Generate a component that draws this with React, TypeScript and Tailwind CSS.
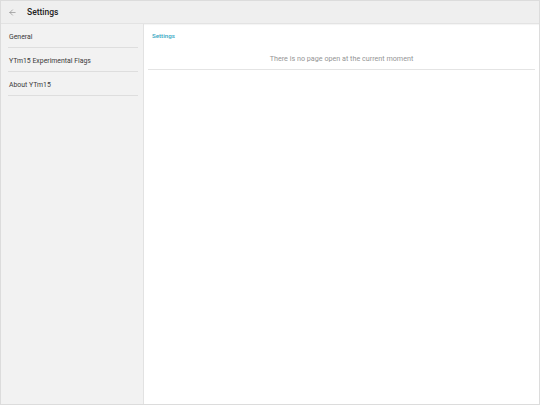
import { ArrowLeft } from 'lucide-react';

const items = ['General', 'YTm15 Experimental Flags', 'About YTm15'];

const App = () => {
  return (
    <div
      className="w-[540px] h-[405px] flex flex-col bg-white border border-[#dcdcdc] overflow-hidden"
      style={{ fontFamily: 'Roboto, "Noto Sans", sans-serif' }}
    >
      {/* Top bar */}
      <div className="h-[23px] shrink-0 flex items-center bg-[#efefef] border-b border-[#e3e3e3] shadow-[0_1px_1px_rgba(0,0,0,0.04)]">
        <ArrowLeft className="w-[9px] h-[9px] ml-[7px] text-[#888]" strokeWidth={1.75} />
        <span className="ml-[10px] text-[8.5px] font-medium text-[#222]">Settings</span>
      </div>

      <div className="flex flex-1">
        {/* Sidebar */}
        <div className="w-[143px] shrink-0 bg-[#f2f2f2] border-r border-[#e2e2e2]">
          {items.map((item) => (
            <div
              key={item}
              className="h-[24px] ml-[7px] mr-[5px] pl-[1px] pt-[3px] flex items-center border-b border-[#dedede] text-[6.9px] text-[#3a3a3a]"
            >
              {item}
            </div>
          ))}
        </div>

        {/* Content */}
        <div className="flex-1 px-[4px]">
          <div className="h-[23px] pt-[2px] flex items-center pl-[4px] text-[6.2px] font-medium text-[#35a6c2]">
            Settings
          </div>
          <div className="h-[23px] pt-[3px] flex items-center justify-center border-b border-[#e4e4e4] text-[7.2px] text-[#959595]">
            There is no page open at the current moment
          </div>
        </div>
      </div>
    </div>
  );
};

export default App;
